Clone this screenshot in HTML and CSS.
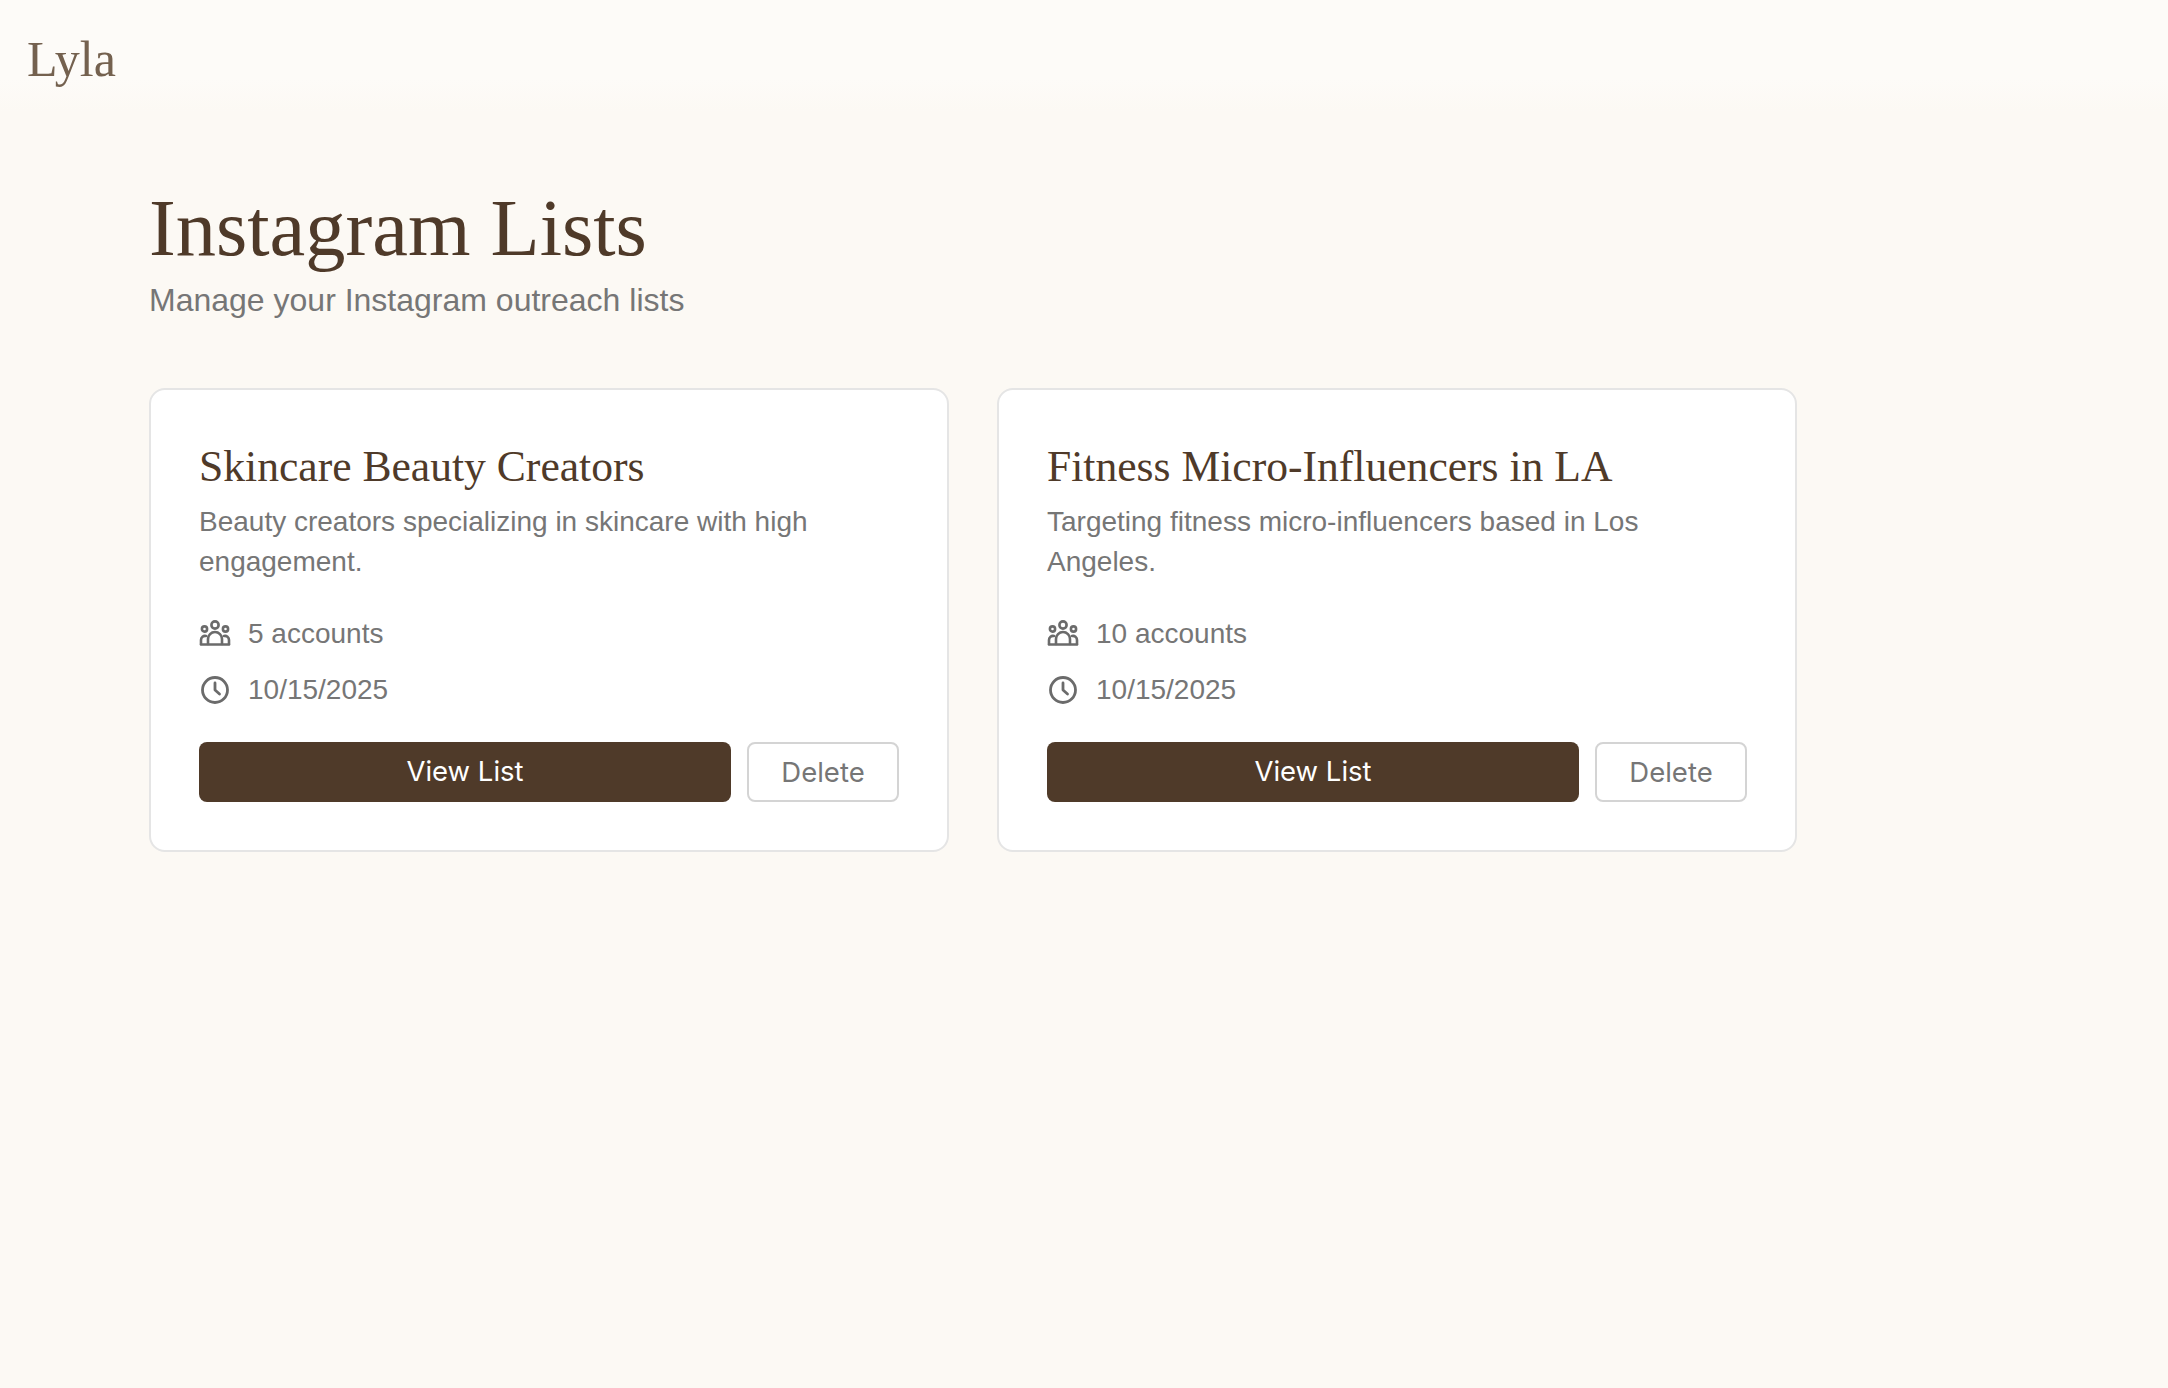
FILE: index.html
```html
<!DOCTYPE html>
<html lang="en">
<head>
<meta charset="utf-8">
<title>Instagram Lists</title>
<link rel="stylesheet" href="styles.css">
</head>
<body>
<header class="topbar"><span class="logo">Lyla</span></header>
<main class="content">
  <h1 class="title">Instagram Lists</h1>
  <p class="subtitle">Manage your Instagram outreach lists</p>
  <section class="cards">
    <article class="card">
      <h2 class="card-title">Skincare Beauty Creators</h2>
      <p class="card-desc">Beauty creators specializing in skincare with high engagement.</p>
      <div class="meta">
        <svg class="icon" viewBox="0 0 32 32" fill="none" stroke="currentColor" stroke-width="2.6" stroke-linecap="round" stroke-linejoin="round"><circle cx="16" cy="7" r="3.6"/><circle cx="5.5" cy="11" r="2.6"/><circle cx="26.5" cy="11" r="2.6"/><path d="M9 26v-5a7 7 0 0 1 14 0v5"/><path d="M2 26v-4a4 4 0 0 1 5-4"/><path d="M30 26v-4a4 4 0 0 0-5-4"/><path d="M2 26.500h28"/></svg>
        <span>5 accounts</span>
      </div>
      <div class="meta">
        <svg class="icon" viewBox="0 0 32 32" fill="none" stroke="currentColor" stroke-width="2.8" stroke-linecap="round" stroke-linejoin="round"><circle cx="16" cy="16" r="12.500"/><path d="M16 9v7l4.500 4"/></svg>
        <span>10/15/2025</span>
      </div>
      <div class="actions">
        <button class="btn btn-primary">View List</button>
        <button class="btn btn-secondary">Delete</button>
      </div>
    </article>
    <article class="card">
      <h2 class="card-title">Fitness Micro-Influencers in LA</h2>
      <p class="card-desc">Targeting fitness micro-influencers based in Los Angeles.</p>
      <div class="meta">
        <svg class="icon" viewBox="0 0 32 32" fill="none" stroke="currentColor" stroke-width="2.6" stroke-linecap="round" stroke-linejoin="round"><circle cx="16" cy="7" r="3.6"/><circle cx="5.5" cy="11" r="2.6"/><circle cx="26.5" cy="11" r="2.6"/><path d="M9 26v-5a7 7 0 0 1 14 0v5"/><path d="M2 26v-4a4 4 0 0 1 5-4"/><path d="M30 26v-4a4 4 0 0 0-5-4"/><path d="M2 26.500h28"/></svg>
        <span>10 accounts</span>
      </div>
      <div class="meta">
        <svg class="icon" viewBox="0 0 32 32" fill="none" stroke="currentColor" stroke-width="2.8" stroke-linecap="round" stroke-linejoin="round"><circle cx="16" cy="16" r="12.500"/><path d="M16 9v7l4.500 4"/></svg>
        <span>10/15/2025</span>
      </div>
      <div class="actions">
        <button class="btn btn-primary">View List</button>
        <button class="btn btn-secondary">Delete</button>
      </div>
    </article>
  </section>
</main>
</body>
</html>
```
FILE: styles.css
```css
* { box-sizing: border-box; }
html, body { margin: 0; height: 100%; }
body {
  background: #fcf9f4;
  font-family: "Liberation Sans", Arial, sans-serif;
  color: #767676;
}
.topbar {
  height: 112px;
  padding: 29px 27px 0;
  background: linear-gradient(#fdfbf8 70%, #fcf9f4);
}
.logo {
  display: block;
  font-family: "Liberation Serif", serif;
  font-size: 50px;
  line-height: 60px;
  color: #74614f;
}
.content { padding: 72px 150px 0 149px; }
.title {
  margin: 0;
  font-family: "Liberation Serif", serif;
  font-weight: 400;
  font-size: 80.400px;
  line-height: 88px;
  color: #4f3a29;
}
.subtitle { margin: 6px 0 0; font-size: 32px; line-height: 44px; }
.cards { display: flex; gap: 48px; margin-top: 66px; }
.card {
  width: 800px;
  height: 464px;
  padding: 50px 48px 0;
  background: #fff;
  border: 2px solid #e5e5e5;
  border-radius: 16px;
}
.card-title {
  margin: 0;
  font-family: "Liberation Serif", serif;
  font-weight: 400;
  font-size: 43.600px;
  line-height: 52px;
  color: #4f3a29;
}
.card-desc { margin: 10px 0 0; font-size: 28px; line-height: 40px; }
.meta {
  display: flex;
  align-items: center;
  gap: 17px;
  height: 40px;
  font-size: 28px;
  margin-top: 16px;
}
.card-desc + .meta { margin-top: 32px; }
.icon { width: 32px; height: 32px; flex: none; color: #6b6b6b; }
.actions { display: flex; gap: 16px; margin-top: 32px; }
.btn {
  height: 60px;
  border-radius: 8px;
  font-family: Inter, sans-serif;
  font-size: 27.500px;
}
.btn-primary { width: 532px; background: #4f3a29; color: #fff; border: 0; padding-bottom: 4px; }
.btn-secondary { width: 152px; background: #fff; color: #767676; border: 2px solid #d4d4d4; }
```
